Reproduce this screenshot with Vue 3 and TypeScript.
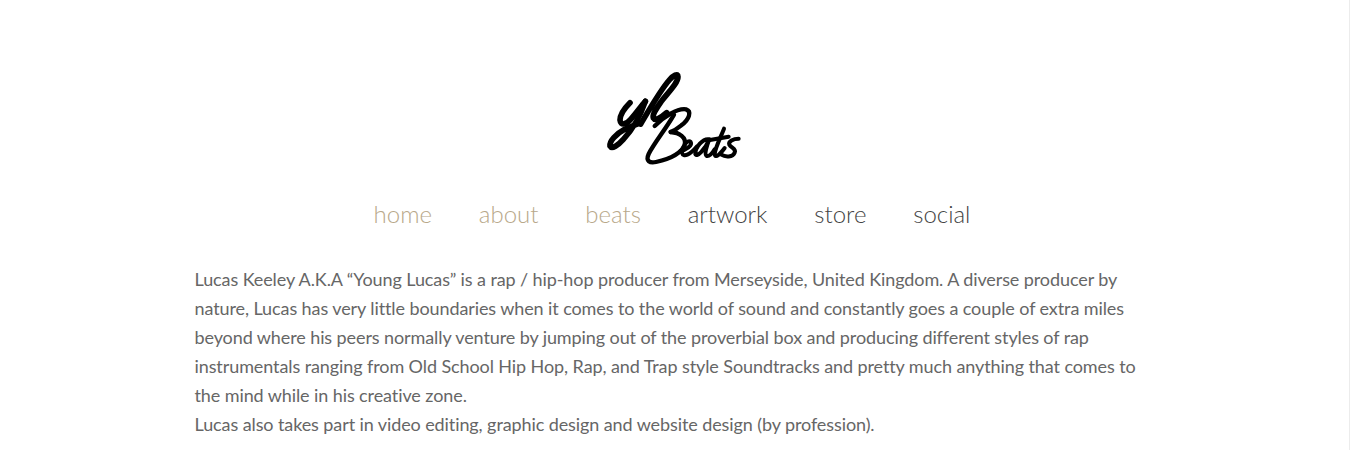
<template>
  <div class="page">
    <header class="logo-wrap">
      <svg class="logo" viewBox="0 0 510 345" width="170" height="115" role="img" aria-label="yl Beats">
        <g class="ink">
          <!-- y -->
          <path d="M120 128 C104 144 90 164 90 180 C92 198 108 194 122 178 C138 160 152 140 166 124" />
          <path d="M166 124 C152 164 128 208 100 238 C84 256 66 268 60 258 C58 244 78 222 104 208 C120 200 138 194 152 188" />
          <!-- l -->
          <path d="M152 192 C176 152 210 92 238 60 C250 46 264 38 264 50 C264 70 232 100 214 124 C200 144 186 164 190 174 C196 184 214 172 230 158" />
          <!-- B -->
          <path class="mid" d="M252 164 C228 206 192 250 176 282 C166 304 180 310 198 306 C232 298 274 282 284 254 C290 232 268 218 242 216" />
          <path class="mid" d="M194 198 C222 170 262 144 288 148 C306 154 298 178 274 196 C264 204 252 212 242 216" />
          <!-- e -->
          <path class="thin" d="M272 272 C288 270 308 256 302 246 C292 236 276 262 276 278 C280 294 300 284 320 260" />
          <!-- a -->
          <path class="thin" d="M358 238 C338 234 316 262 316 282 C320 294 344 270 358 238 C350 258 342 284 350 288 C358 290 368 278 374 268" />
          <!-- t -->
          <path class="thin" d="M402 206 C392 232 376 262 374 282 C376 298 392 280 404 264" />
          <path class="thin" d="M360 240 L416 230" />
          <!-- s -->
          <path class="thin" d="M446 236 C430 236 414 244 418 254 C424 264 440 266 434 278 C428 292 406 292 394 284" />
        </g>
      </svg>
    </header>
    <nav class="menu">
      <a
        v-for="item in menu"
        :key="item.label"
        class="menu-item"
        :class="{ visited: item.visited }"
        href="#"
      >{{ item.label }}</a>
    </nav>
    <main class="bio">
      <p v-for="para in paragraphs" :key="para">{{ para }}</p>
    </main>
  </div>
</template>

<script setup lang="ts">
interface MenuItem {
  label: string;
  visited: boolean;
}

const menu: MenuItem[] = [
  { label: 'home', visited: true },
  { label: 'about', visited: true },
  { label: 'beats', visited: true },
  { label: 'artwork', visited: false },
  { label: 'store', visited: false },
  { label: 'social', visited: false },
];

const paragraphs: string[] = [
  'Lucas Keeley A.K.A “Young Lucas” is a rap / hip-hop producer from Merseyside, United Kingdom. A diverse producer by nature, Lucas has very little boundaries when it comes to the world of sound and constantly goes a couple of extra miles beyond where his peers normally venture by jumping out of the proverbial box and producing different styles of rap instrumentals ranging from Old School Hip Hop, Rap, and Trap style Soundtracks and pretty much anything that comes to the mind while in his creative zone.',
  'Lucas also takes part in video editing, graphic design and website design (by profession).',
];
</script>

<style>
html,
body {
  margin: 0;
  background: #fff;
  overflow: hidden;
}
</style>

<style scoped>
.page {
  height: 450px;
  box-sizing: border-box;
  border-right: 1px solid #ececec;
  font-family: Lato, "Liberation Sans", sans-serif;
  overflow: hidden;
}

.logo-wrap {
  display: flex;
  justify-content: center;
  padding-top: 60px;
}

.logo {
  display: block;
}

.ink path {
  fill: none;
  stroke: #000;
  stroke-width: 17;
  stroke-linecap: round;
  stroke-linejoin: round;
}

.ink path.mid {
  stroke-width: 13;
}

.ink path.thin {
  stroke-width: 12;
}

.menu {
  display: flex;
  justify-content: center;
  gap: 46.8px;
  margin-top: 21px;
  padding-right: 5px;
}

.menu-item {
  font-size: 24px;
  font-weight: 300;
  line-height: 36px;
  color: #444;
  text-decoration: none;
}

.menu-item.visited {
  color: #b8a88a;
}

.bio {
  width: 960px;
  margin: 33px auto 0;
  font-size: 18px;
  letter-spacing: -0.095px;
  line-height: 29px;
  color: #666;
}

.bio p {
  margin: 0;
}
</style>
